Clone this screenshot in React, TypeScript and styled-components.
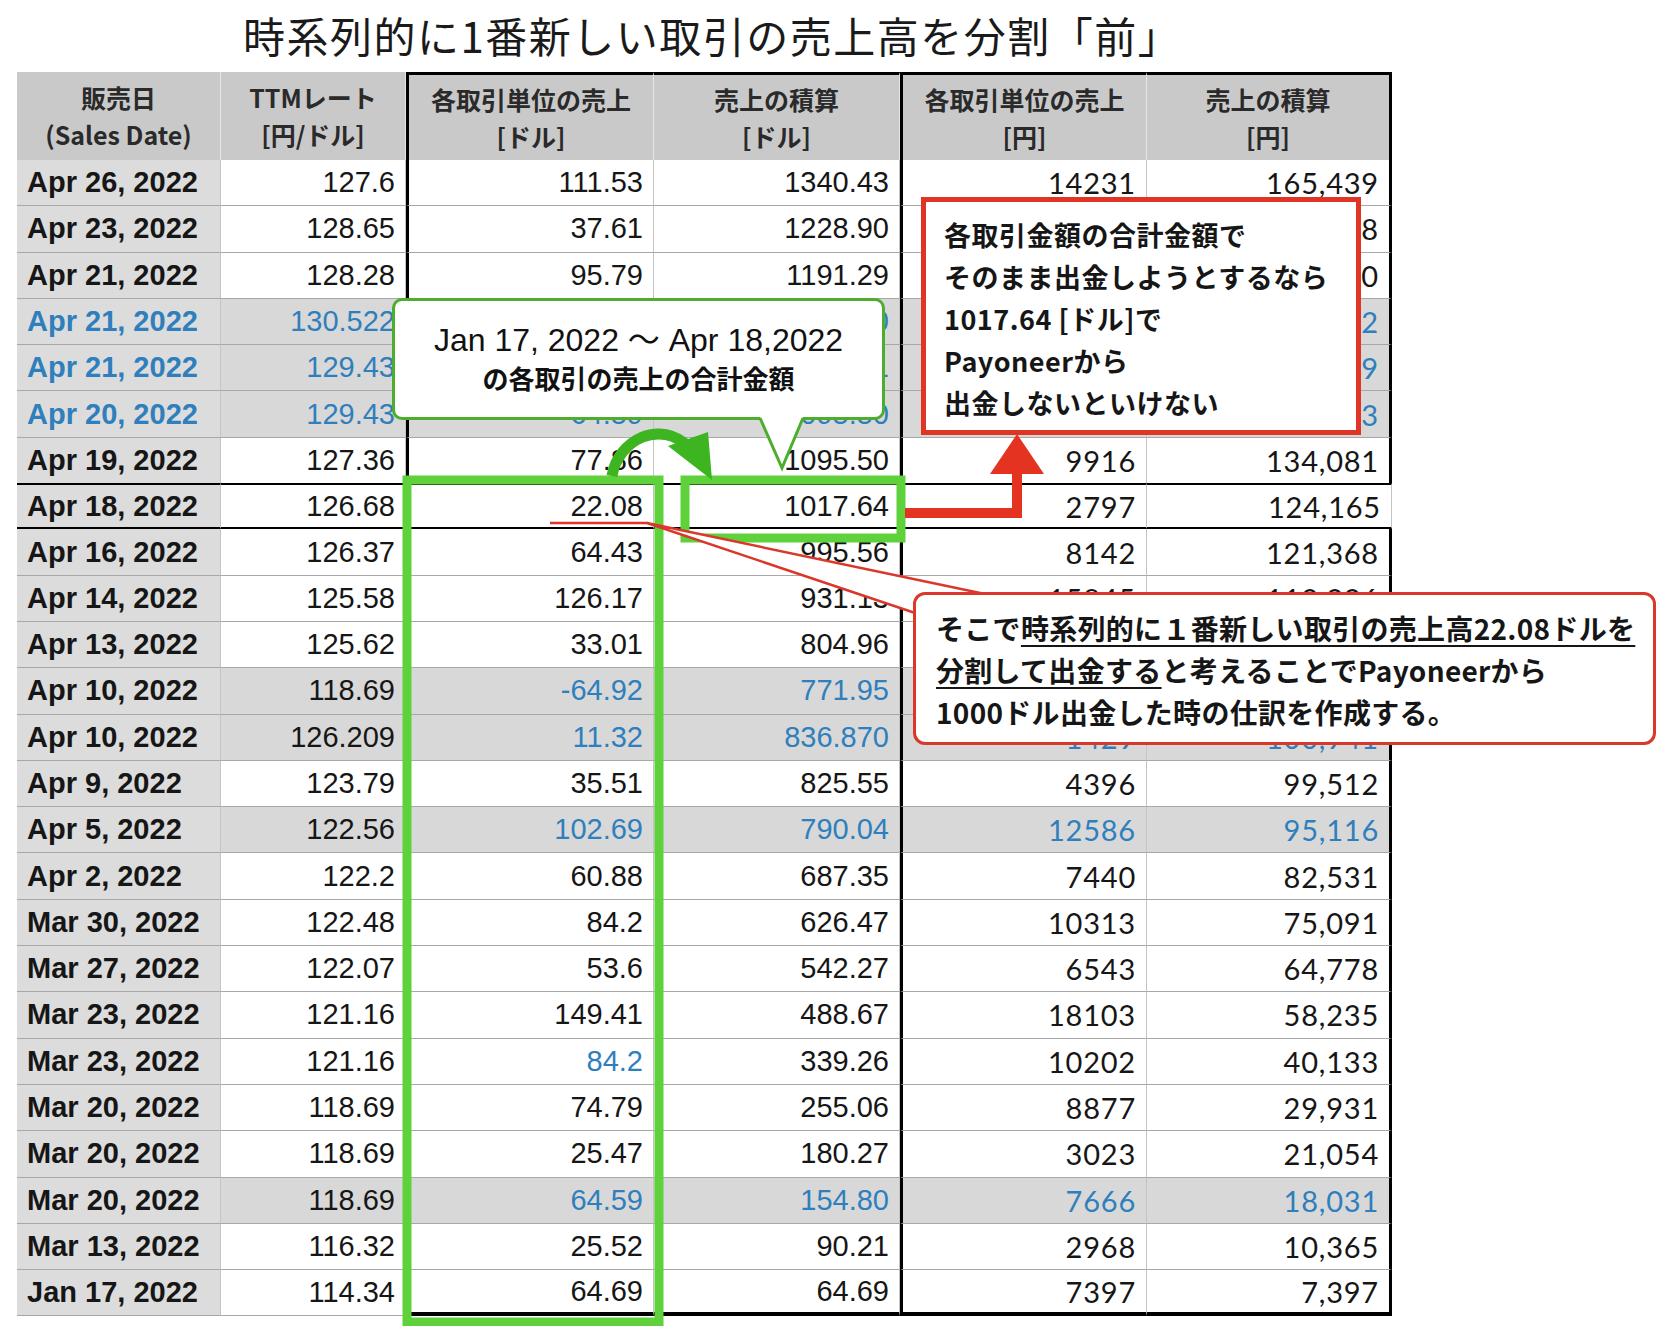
import React from "react";
import styled, { createGlobalStyle, css } from "styled-components";

const Global = createGlobalStyle`
  html, body { margin: 0; padding: 0; background: #fff; }
  body { font-family: "Noto Sans CJK JP", "Liberation Sans", sans-serif; color: #111; }
`;

const Page = styled.div`
  position: relative;
  width: 1660px;
  height: 1326px;
  overflow: hidden;
`;

const Title = styled.h1`
  margin: 0;
  height: 72px;
  padding-left: 243px;
  font-size: 42px;
  font-weight: 400;
  line-height: 70px;
  letter-spacing: 1.5px;
  color: #1a1a1a;
`;

const Table = styled.div`
  margin-left: 17px;
  width: 1375px;
  display: grid;
  grid-template-columns: 204px 185px 248px 246px 247px 245px;
`;

const BLUE = "#2f7fbd";

const H = styled.div<{ $thickL?: boolean; $thickR?: boolean; $top?: boolean }>`
  height: 88px;
  box-sizing: border-box;
  background: #c9c9c9;
  display: flex;
  flex-direction: column;
  align-items: center;
  justify-content: center;
  font-weight: 700;
  font-size: 25px;
  line-height: 37px;
  color: #2a2a2a;
  border-right: 1px solid #e6e6e6;
  ${(p) => p.$top && css`border-top: 3px solid #000;`}
  ${(p) => p.$thickL && css`border-left: 3px solid #000;`}
  ${(p) => p.$thickR && css`border-right: 3px solid #000;`}
`;

const Cell = styled.div<{
  $gray?: boolean; $date?: boolean; $blue?: boolean;
  $thickL?: boolean; $thickR?: boolean; $last?: boolean; $sel?: boolean; $wide?: boolean;
}>`
  height: 46.3px;
  box-sizing: border-box;
  display: flex;
  align-items: center;
  justify-content: ${(p) => (p.$date ? "flex-start" : "flex-end")};
  padding: ${(p) => (p.$date ? "0 0 0 10px" : "0 10px 0 0")};
  font-size: 29px;
  font-weight: ${(p) => (p.$date ? 700 : 400)};
  font-family: ${(p) => (p.$wide ? '"Lato", "Liberation Sans", sans-serif' : '"Liberation Sans", "Noto Sans CJK JP", sans-serif')};
  letter-spacing: ${(p) => (p.$wide ? "0.8px" : "0")};
  color: ${(p) => (p.$blue ? BLUE : "#161616")};
  background: ${(p) => (p.$date ? "#dcdcdc" : p.$gray ? "#d8d8d8" : "#fff")};
  border-bottom: 1px solid #a8a8a8;
  border-right: 1px solid #c4c4c4;
  white-space: nowrap;
  ${(p) => p.$thickL && css`border-left: 3px solid #000;`}
  ${(p) => p.$thickR && css`border-right: 3px solid #000;`}
  ${(p) => p.$last && css`border-bottom: 4px solid #000;`}
  ${(p) => p.$sel && css`border-top: 2px solid #000; border-bottom: 2px solid #000; margin-top: -1px;`}
`;

type Row = {
  d: string; r: string; u: string; c: string; y: string; yc: string;
  gray?: boolean; bd?: boolean; br?: boolean; b3?: boolean; b4?: boolean; b5?: boolean; sel?: boolean;
};

const rows: Row[] = [
  { d: "Apr 26, 2022", r: "127.6", u: "111.53", c: "1340.43", y: "14231", yc: "165,439" },
  { d: "Apr 23, 2022", r: "128.65", u: "37.61", c: "1228.90", y: "4838", yc: "151,208" },
  { d: "Apr 21, 2022", r: "128.28", u: "95.79", c: "1191.29", y: "12288", yc: "146,370" },
  { d: "Apr 21, 2022", r: "130.522", u: "64.59", c: "1095.50", y: "8430", yc: "134,082", gray: true, bd: true, br: true, b3: true, b4: true, b5: true },
  { d: "Apr 21, 2022", r: "129.43", u: "-64.59", c: "1030.91", y: "-8360", yc: "125,659", gray: true, bd: true, br: true, b3: true, b4: true, b5: true },
  { d: "Apr 20, 2022", r: "129.43", u: "64.59", c: "1095.50", y: "8360", yc: "134,043", gray: true, bd: true, br: true, b3: true, b4: true, b5: true },
  { d: "Apr 19, 2022", r: "127.36", u: "77.86", c: "1095.50", y: "9916", yc: "134,081" },
  { d: "Apr 18, 2022", r: "126.68", u: "22.08", c: "1017.64", y: "2797", yc: "124,165", sel: true },
  { d: "Apr 16, 2022", r: "126.37", u: "64.43", c: "995.56", y: "8142", yc: "121,368" },
  { d: "Apr 14, 2022", r: "125.58", u: "126.17", c: "931.13", y: "15845", yc: "113,226" },
  { d: "Apr 13, 2022", r: "125.62", u: "33.01", c: "804.96", y: "4147", yc: "97,381" },
  { d: "Apr 10, 2022", r: "118.69", u: "-64.92", c: "771.95", y: "-7705", yc: "93,234", gray: true, b3: true, b4: true, b5: true },
  { d: "Apr 10, 2022", r: "126.209", u: "11.32", c: "836.870", y: "1429", yc: "100,941", gray: true, b3: true, b4: true, b5: true },
  { d: "Apr 9, 2022", r: "123.79", u: "35.51", c: "825.55", y: "4396", yc: "99,512" },
  { d: "Apr 5, 2022", r: "122.56", u: "102.69", c: "790.04", y: "12586", yc: "95,116", gray: true, b3: true, b4: true, b5: true },
  { d: "Apr 2, 2022", r: "122.2", u: "60.88", c: "687.35", y: "7440", yc: "82,531" },
  { d: "Mar 30, 2022", r: "122.48", u: "84.2", c: "626.47", y: "10313", yc: "75,091" },
  { d: "Mar 27, 2022", r: "122.07", u: "53.6", c: "542.27", y: "6543", yc: "64,778" },
  { d: "Mar 23, 2022", r: "121.16", u: "149.41", c: "488.67", y: "18103", yc: "58,235" },
  { d: "Mar 23, 2022", r: "121.16", u: "84.2", c: "339.26", y: "10202", yc: "40,133", b3: true },
  { d: "Mar 20, 2022", r: "118.69", u: "74.79", c: "255.06", y: "8877", yc: "29,931" },
  { d: "Mar 20, 2022", r: "118.69", u: "25.47", c: "180.27", y: "3023", yc: "21,054" },
  { d: "Mar 20, 2022", r: "118.69", u: "64.59", c: "154.80", y: "7666", yc: "18,031", gray: true, b3: true, b4: true, b5: true },
  { d: "Mar 13, 2022", r: "116.32", u: "25.52", c: "90.21", y: "2968", yc: "10,365" },
  { d: "Jan 17, 2022", r: "114.34", u: "64.69", c: "64.69", y: "7397", yc: "7,397" },
];

const Overlay = styled.svg`
  position: absolute;
  left: 0;
  top: 0;
  pointer-events: none;
`;

const GreenCallout = styled.div`
  position: absolute;
  left: 392px;
  top: 298px;
  width: 493px;
  height: 122px;
  box-sizing: border-box;
  border: 3px solid #4cae2c;
  border-radius: 10px;
  background: #fff;
  display: flex;
  flex-direction: column;
  align-items: center;
  justify-content: center;
  gap: 2px;
  font-family: "Liberation Sans", "Noto Sans CJK JP", sans-serif;
`;

const BigLine = styled.div`
  font-size: 32px;
  line-height: 40px;
  color: #111;
`;

const SmallBold = styled.div`
  font-size: 26px;
  font-weight: 700;
  line-height: 36px;
  color: #111;
`;

const RedBox = styled.div`
  position: absolute;
  left: 921px;
  top: 197px;
  width: 440px;
  height: 238px;
  box-sizing: border-box;
  border: 5px solid #e03424;
  background: #fff;
  padding: 12px 0 0 18px;
  font-size: 27px;
  font-weight: 700;
  line-height: 42px;
  letter-spacing: 0.5px;
  color: #161616;
`;

const RedCallout = styled.div`
  position: absolute;
  left: 913px;
  top: 592px;
  width: 743px;
  height: 153px;
  box-sizing: border-box;
  border: 3px solid #d9382a;
  border-radius: 12px;
  background: #fff;
  padding: 12px 0 0 20px;
  font-size: 28px;
  font-weight: 700;
  line-height: 42px;
  letter-spacing: 0.3px;
  color: #161616;
  white-space: nowrap;
`;

const U = styled.span`
  text-decoration: underline;
  text-underline-offset: 5px;
  text-decoration-thickness: 2px;
`;

export default function App() {
  return (
    <Page>
      <Global />
      <Title>時系列的に1番新しい取引の売上高を分割「前」</Title>
      <Table>
        <H>
          <span>販売日</span>
          <span>(Sales Date)</span>
        </H>
        <H>
          <span>TTMレート</span>
          <span>[円/ドル]</span>
        </H>
        <H $top $thickL>
          <span>各取引単位の売上</span>
          <span>[ドル]</span>
        </H>
        <H $top>
          <span>売上の積算</span>
          <span>[ドル]</span>
        </H>
        <H $top $thickL>
          <span>各取引単位の売上</span>
          <span>[円]</span>
        </H>
        <H $top $thickR>
          <span>売上の積算</span>
          <span>[円]</span>
        </H>
        {rows.map((r, i) => {
          const last = i === rows.length - 1;
          return (
            <React.Fragment key={i}>
              <Cell $date $blue={r.bd} $sel={r.sel}>{r.d}</Cell>
              <Cell $gray={r.gray} $blue={r.br} $sel={r.sel}>{r.r}</Cell>
              <Cell $gray={r.gray} $blue={r.b3} $thickL $last={last} $sel={r.sel}>{r.u}</Cell>
              <Cell $gray={r.gray} $blue={r.b4} $last={last} $sel={r.sel}>{r.c}</Cell>
              <Cell $wide $gray={r.gray} $blue={r.b5} $thickL $last={last} $sel={r.sel}>{r.y}</Cell>
              <Cell $wide $gray={r.gray} $blue={r.b5} $thickR={!r.sel} $last={last} $sel={r.sel}>{r.yc}</Cell>
            </React.Fragment>
          );
        })}
      </Table>

      <Overlay width="1660" height="1326" viewBox="0 0 1660 1326">
        <rect x="407" y="480" width="252" height="842" fill="none" stroke="#5fd13a" strokeWidth="9" />
        <rect x="685" y="480" width="216" height="58" fill="none" stroke="#5fd13a" strokeWidth="9" />
        <line x1="550" y1="523" x2="647" y2="523" stroke="#e03424" strokeWidth="2.5" />
        <polygon points="647,523 985,594 930,618" fill="#fff" stroke="#d9382a" strokeWidth="2.5" strokeLinejoin="round" />
        <polyline points="905,513 1017,513 1017,470" fill="none" stroke="#e53322" strokeWidth="10" />
        <polygon points="990,474 1044,474 1017,434" fill="#e53322" />
        <path d="M612 476 C 618 440, 660 418, 690 448" fill="none" stroke="#3cb521" strokeWidth="11" />
        <polygon points="668,446 708,432 712,480" fill="#3cb521" />
      </Overlay>

      <GreenCallout>
        <BigLine>Jan 17, 2022 〜 Apr 18,2022</BigLine>
        <SmallBold>の各取引の売上の合計金額</SmallBold>
      </GreenCallout>
      <Overlay width="1660" height="1326" viewBox="0 0 1660 1326">
        <polygon points="760,417 782,468 803,417" fill="#fff" />
        <polyline points="760,418 782,468 803,418" fill="none" stroke="#4cae2c" strokeWidth="3" />
      </Overlay>

      <RedBox>
        <div>各取引金額の合計金額で</div>
        <div>そのまま出金しようとするなら</div>
        <div>1017.64 [ドル]で</div>
        <div>Payoneerから</div>
        <div>出金しないといけない</div>
      </RedBox>

      <RedCallout>
        <div>
          そこで<U>時系列的に１番新しい取引の売上高22.08ドルを</U>
        </div>
        <div>
          <U>分割して出金する</U>と考えることでPayoneerから
        </div>
        <div>1000ドル出金した時の仕訳を作成する。</div>
      </RedCallout>
    </Page>
  );
}
